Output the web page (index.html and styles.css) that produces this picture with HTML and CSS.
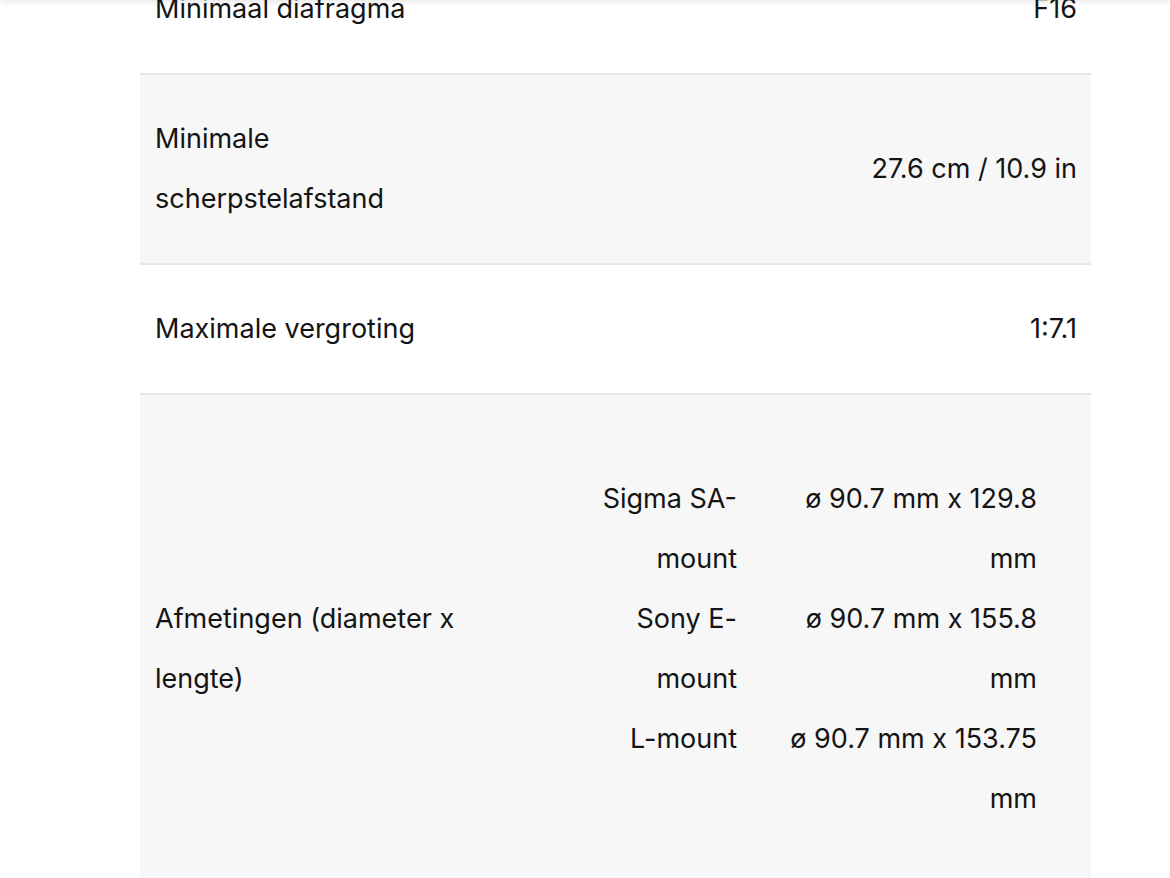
FILE: index.html
```html
<!DOCTYPE html>
<html lang="nl">
<head>
<meta charset="utf-8">
<title>Specificaties</title>
<link rel="stylesheet" href="styles.css">
</head>
<body>
<div class="topbar"></div>
<div class="specs">
  <div class="row">
    <div class="label">Minimaal diafragma</div>
    <div class="value">F16</div>
  </div>
  <div class="row alt">
    <div class="label">Minimale scherpstelafstand</div>
    <div class="value">27.6 cm / 10.9 in</div>
  </div>
  <div class="row">
    <div class="label">Maximale vergroting</div>
    <div class="value">1:7.1</div>
  </div>
  <div class="row alt">
    <div class="label">Afmetingen (diameter x lengte)</div>
    <div class="mounts">
      <div class="mount">Sigma SA-mount</div>
      <div class="dim">ø 90.7 mm x 129.8 mm</div>
      <div class="mount">Sony E-mount</div>
      <div class="dim">ø 90.7 mm x 155.8 mm</div>
      <div class="mount">L-mount</div>
      <div class="dim">ø 90.7 mm x 153.75 mm</div>
    </div>
  </div>
</div>
</body>
</html>
```
FILE: styles.css
```css
html, body {
  margin: 0;
  padding: 0;
  background: #ffffff;
}
body {
  font-family: Inter, "Noto Sans", sans-serif;
  font-size: 27px;
  line-height: 60px;
  color: #141414;
  overflow: hidden;
}
.topbar {
  position: fixed;
  top: -20px;
  left: 0;
  right: 0;
  height: 20px;
  background: #ffffff;
  box-shadow: 0 1px 7px rgba(0, 0, 0, 0.12);
  z-index: 5;
}
.specs {
  width: 951px;
  margin: -55px 0 0 140px;
}
.row {
  display: flex;
  justify-content: space-between;
  align-items: center;
  padding: 34px 14px 34px 15px;
  border-bottom: 2px solid #e7e7e7;
}
.row.alt {
  background: #f7f7f7;
}
.label {
  width: 320px;
}
.value {
  text-align: right;
}
.mounts {
  display: grid;
  grid-template-columns: 150px 252px;
  column-gap: 48px;
  margin: 40px 40px 40px 0;
  text-align: right;
}
```
